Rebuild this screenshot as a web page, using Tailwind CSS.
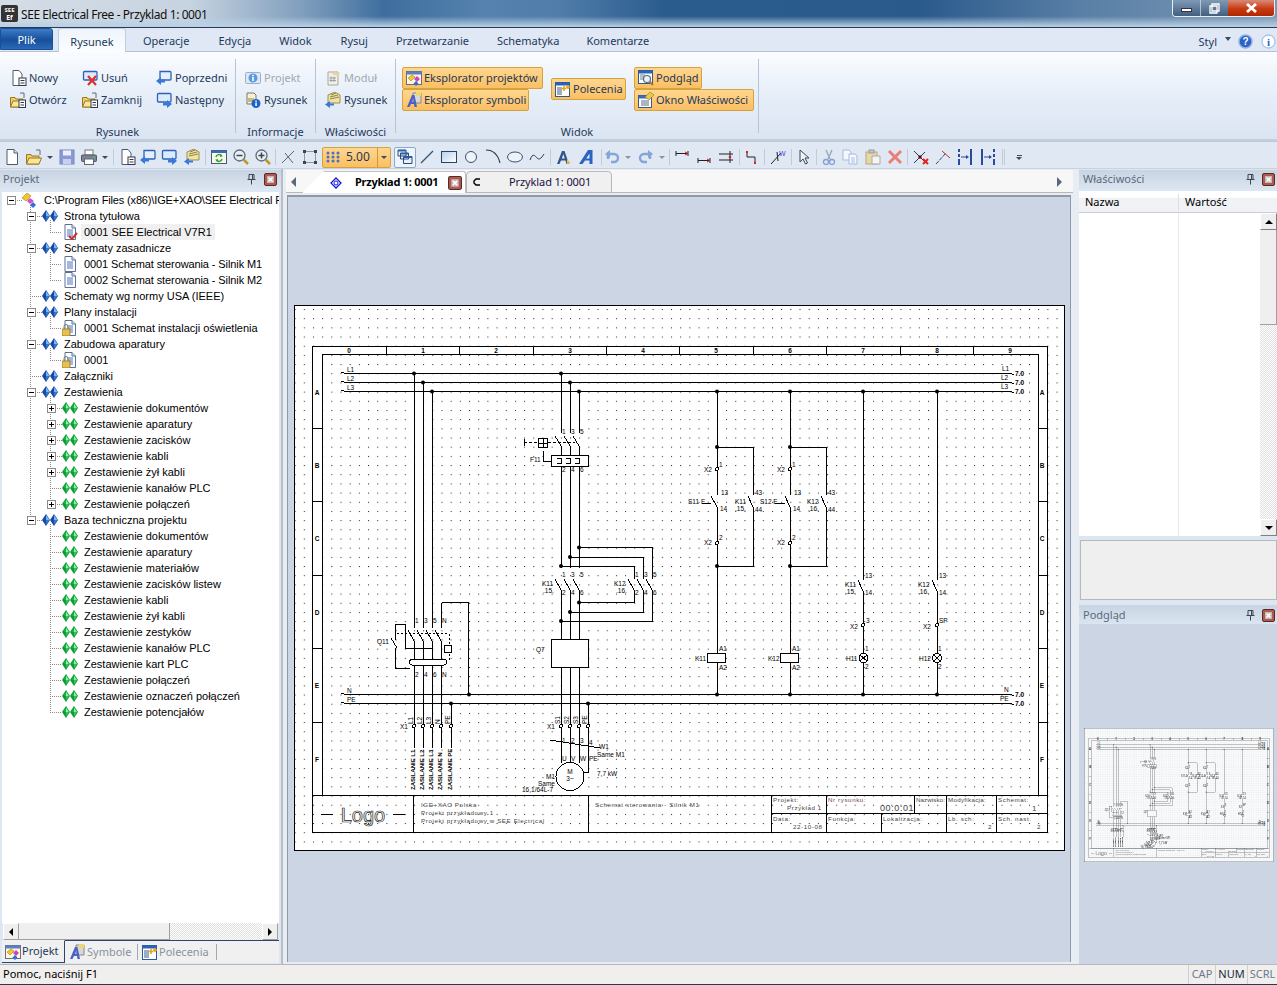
<!DOCTYPE html>
<html lang="pl">
<head>
<meta charset="utf-8">
<title>SEE Electrical Free</title>
<script src="https://cdn.jsdelivr.net/npm/@tailwindcss/browser@4"></script>
</head>
<body class="m-0 overflow-hidden">
<svg class="absolute h-0 w-0" width="0" height="0">
<defs>
<symbol id="dblue" viewBox="0 0 16 12"><path d="M4 0 8 6 4 12 0 6z" fill="#1848a8"/><path d="M4 1 7.500 6H4z" fill="#7ab8f2"/><path d="M4 6H7.500L4 11z" fill="#2f78d8"/><path d="M12 0 16 6 12 12 8 6z" fill="#1848a8"/><path d="M12 1 15.500 6H12z" fill="#7ab8f2"/><path d="M12 6H15.500L12 11z" fill="#2f78d8"/></symbol>
<symbol id="dgreen" viewBox="0 0 16 12"><path d="M4 0 8 6 4 12 0 6z" fill="#0f9a38"/><path d="M4 1.500 7 6H4z" fill="#8ff0a0"/><path d="M4 6H7L4 10.500z" fill="#2fc858"/><path d="M1 6H4V1.500z" fill="#18b048"/><path d="M12 0 16 6 12 12 8 6z" fill="#0f9a38"/><path d="M12 1.500 15 6H12z" fill="#8ff0a0"/><path d="M12 6H15L12 10.500z" fill="#2fc858"/><path d="M9 6H12V1.500z" fill="#18b048"/></symbol>
<symbol id="root" viewBox="0 0 16 16"><path d="M0 6 5 1 9 4 4 9z" fill="#f0c830" stroke="#a08010" stroke-width=".6"/><path d="M8 6 12 9 8 12 5 9z" fill="#d050d0"/><path d="M11 10 14 13 11 16 8 13z" fill="#3070d8"/></symbol>
<symbol id="doc" viewBox="0 0 16 16"><path d="M3 .5H10L13.500 4V15.500H3z" fill="#fff" stroke="#5a7090"/><path d="M10 .5V4H13.500" fill="#d8e4f0" stroke="#5a7090"/><path d="M5 6H11M5 8H11M5 10H11M5 12H11" stroke="#4a70c8"/></symbol>
<symbol id="doccheck" viewBox="0 0 16 16"><use href="#doc"/><path d="M7 12 10 15 15 9" fill="none" stroke="#d03020" stroke-width="2"/></symbol>
<symbol id="doclock" viewBox="0 0 16 16"><use href="#doc"/><rect x="0" y="9" width="8" height="7" fill="#e8c050" stroke="#8a6a10" stroke-width=".7"/><path d="M2 9V6.500A2 2 0 0 1 6 6.500V9" fill="none" stroke="#7a7a7a"/></symbol>
<symbol id="new" viewBox="0 0 16 16"><path d="M3 .5H10L13.500 4V15.500H3z" fill="#fff" stroke="#505a6a"/><path d="M10 .5V4H13.500" fill="#e4e8f0" stroke="#505a6a"/></symbol>
<symbol id="newdoc" viewBox="0 0 16 16"><path d="M2 .5H8L11 4V15.500H2z" fill="#fff" stroke="#505a6a"/><rect x="8" y="8" width="7" height="7.500" fill="#fff" stroke="#303a4a"/><path d="M9.500 10.500H13.500M9.500 13H13.500" stroke="#303a4a"/></symbol>
<symbol id="open" viewBox="0 0 16 16"><path d="M.5 5.500H5L6 7H13V15H.5z" fill="#f2cc6a" stroke="#9a7a20"/><path d="M.5 15 3 9H15.500L13 15z" fill="#fbe59a" stroke="#9a7a20"/><path d="M10 1 14 1V6" fill="none" stroke="#667"/></symbol>
<symbol id="opendoc" viewBox="0 0 16 16"><use href="#open"/><rect x="9" y="8" width="6.500" height="7.500" fill="#fff" stroke="#303a4a"/><path d="M10.500 10.500H14M10.500 13H14" stroke="#303a4a"/></symbol>
<symbol id="bub" viewBox="0 0 16 16"><path d="M2.500 1.500H14a1 1 0 0 1 1 1V9a1 1 0 0 1-1 1H2.500a1 1 0 0 1-1-1V2.500a1 1 0 0 1 1-1z" fill="#dceaff" stroke="#2f62b4" stroke-width="1.300"/></symbol>
<symbol id="del" viewBox="0 0 16 16"><use href="#bub"/><path d="M6 6 14 15M14 6 6 15" stroke="#e03028" stroke-width="2.200"/></symbol>
<symbol id="prev" viewBox="0 0 16 16"><path d="M4 1.500H14a1 1 0 0 1 1 1V9a1 1 0 0 1-1 1H4z" fill="#e4eeff" stroke="#2f62b4" stroke-width="1.300"/><path d="M0 11 5 7V9.500H9V12.500H5V15z" fill="#3a78d8"/></symbol>
<symbol id="next" viewBox="0 0 16 16"><use href="#bub"/><path d="M16 12 11 8V10.500H7V13.500H11V16z" fill="#3a78d8"/></symbol>
<symbol id="info" viewBox="0 0 16 16"><rect x=".5" y="2.500" width="15" height="11" rx="1" fill="#dfe8f2" stroke="#9ab0c8"/><circle cx="8" cy="8" r="4.500" fill="#5a9ae0"/><rect x="7.200" y="7" width="1.600" height="4" fill="#fff"/><rect x="7.200" y="4.800" width="1.600" height="1.500" fill="#fff"/></symbol>
<symbol id="rysinfo" viewBox="0 0 16 16"><path d="M2 1H9L11 3V12H2z" fill="#f4f0e0" stroke="#7a7a60"/><path d="M3 6H9V10H3z" fill="#c8b880"/><circle cx="11" cy="11.500" r="4.500" fill="#1c62c8"/><rect x="10.300" y="10.500" width="1.500" height="3.500" fill="#fff"/><rect x="10.300" y="8.500" width="1.500" height="1.300" fill="#fff"/></symbol>
<symbol id="mod" viewBox="0 0 16 16"><path d="M3 2H13V15H3z" fill="#f0f0ea" stroke="#a8a8a0"/><path d="M9 1 15 3 13 6 7 4z" fill="#e4d49c"/><path d="M6 6.500V12M9 6.500V12M4.500 8H11M4.500 10.500H11" stroke="#a0a0a0"/></symbol>
<symbol id="prop" viewBox="0 0 16 16"><path d="M3 3 10 0 15 3 15 11H3z" fill="#f2e4a0" stroke="#7a6a20" stroke-width=".7"/><path d="M6 3 11 1M5 5 13 3M5 7 14 5" stroke="#5a5a30" stroke-width=".7"/><path d="M0 12.500 5 9V11.500H9V13.500H5V16z" fill="#3a78d8"/></symbol>
<symbol id="exproj" viewBox="0 0 16 16"><rect x=".5" y="1.500" width="15" height="13" fill="#fff8d8" stroke="#6a6a8a"/><rect x=".5" y="1.500" width="15" height="3" fill="#5a80c8"/><path d="M2 8 6 5 9 7 5 11z" fill="#f0c830" stroke="#907010" stroke-width=".5"/><path d="M11 6 14 9 11 12 8 9z" fill="#d040d0"/><path d="M10 11 12.500 13.500 10 16 7.500 13.500z" fill="#3070d8"/></symbol>
<symbol id="exsym" viewBox="0 0 16 16"><path d="M7 1H15V11H7z" fill="#d8d8d8" stroke="#888"/><path d="M10 0H15V4H10z" fill="#f0d870"/><path d="M1 15 6 3H8.500L11 15H8.500L8 12H5L3.500 15zM6 10H7.700L7.200 6z" fill="#4a62c8"/></symbol>
<symbol id="pol" viewBox="0 0 16 16"><rect x=".5" y="1.500" width="14" height="14" fill="#fff" stroke="#2a5a9a"/><rect x=".5" y="1.500" width="14" height="3" fill="#2a62b8"/><path d="M2 7H7M2 9H7M2 11H7M2 13H7" stroke="#3a5a8a"/><path d="M9 5V10M6.500 7.500H11.500M13 4V8M11 6H15" stroke="#e0a818" stroke-width="1.600"/></symbol>
<symbol id="pod" viewBox="0 0 16 16"><rect x=".5" y=".5" width="14" height="13" fill="#fff" stroke="#2a5a9a"/><rect x=".5" y=".5" width="14" height="3" fill="#2a62b8"/><path d="M2 5H7M2 7H6M2 9H6" stroke="#6a7a90"/><circle cx="9" cy="9" r="3.500" fill="#e8f0f8" stroke="#5a6a7a" stroke-width="1.200"/><path d="M11.500 11.500 15 15" stroke="#a07830" stroke-width="2"/></symbol>
<symbol id="okno" viewBox="0 0 16 16"><rect x=".5" y="3.500" width="13" height="12" fill="#fff" stroke="#3a5a8a"/><rect x=".5" y="3.500" width="13" height="3" fill="#3a6ab8"/><path d="M3 9H11M3 11H11M3 13H11" stroke="#5a6a80"/><path d="M7 5 12 0 16 3 11 8z" fill="#e8c850" stroke="#806a10" stroke-width=".5"/></symbol>
<symbol id="save" viewBox="0 0 16 16"><rect x="1" y="1" width="14" height="14" fill="#8a9ad8" stroke="#7a88c0"/><rect x="4" y="1.500" width="8" height="5" fill="#eef"/><rect x="4" y="10" width="8" height="5" fill="#c8d0ee"/></symbol>
<symbol id="print" viewBox="0 0 16 16"><rect x="4" y="1" width="8" height="5" fill="#fff" stroke="#778"/><rect x=".5" y="6" width="15" height="6.500" rx="1" fill="#7a8594" stroke="#556"/><rect x="3.500" y="10" width="9" height="5.500" fill="#fff" stroke="#667"/><rect x="12" y="7.500" width="2" height="1.500" fill="#4ac060"/></symbol>
<symbol id="refresh" viewBox="0 0 16 16"><rect x=".5" y="1.500" width="15" height="13" fill="#f8f8e8" stroke="#4a5a7a"/><rect x=".5" y="1.500" width="15" height="2.500" fill="#3a6ab8"/><path d="M5 8A3 3 0 0 1 10.500 7M11 10A3 3 0 0 1 5.500 11" fill="none" stroke="#2aa030" stroke-width="1.500"/><path d="M9.500 5 11.800 7.300 9 8zM6.500 13 4.200 10.700 7 10z" fill="#2aa030"/></symbol>
<symbol id="zm" viewBox="0 0 16 16"><circle cx="6.500" cy="6.500" r="5.500" fill="#e8eef6" stroke="#5f6a78" stroke-width="1.300"/><path d="M3.500 6.500H9.500" stroke="#3a4654" stroke-width="1.500"/><path d="M10.500 10.500 15 15" stroke="#c09828" stroke-width="2.500"/></symbol>
<symbol id="zp" viewBox="0 0 16 16"><use href="#zm"/><path d="M6.500 3.500V9.500" stroke="#3a4654" stroke-width="1.500"/></symbol>
<symbol id="copy" viewBox="0 0 16 16"><path d="M1 1H7L9 3V11H1z" fill="#f4f8ff" stroke="#a8b8d8"/><path d="M7 5H13L15 7V15H7z" fill="#f4f8ff" stroke="#a8b8d8"/><path d="M9 9H13M9 11H13M9 13H13" stroke="#a8c0e0"/></symbol>
<symbol id="paste" viewBox="0 0 16 16"><rect x="1" y="3" width="11" height="12" fill="#e8d8a8" stroke="#b8a878"/><rect x="4" y="1" width="5" height="3" fill="#c8c8c8" stroke="#999"/><path d="M7 7H15V15H7z" fill="#f4f4f4" stroke="#a8a8a8"/></symbol>
<symbol id="closex" viewBox="0 0 13 13"><rect x=".5" y=".5" width="12" height="12" rx="1.500" fill="#ad5a50" stroke="#5a2a28"/><rect x="3" y="3" width="7" height="7" fill="#c8b8b4"/><path d="M4.500 4.500 8.500 8.500M8.500 4.500 4.500 8.500" stroke="#fff" stroke-width="1.500"/></symbol>
<symbol id="pin" viewBox="0 0 9 11"><path d="M2 .5H7V5.500H2zM.5 5.500H8.500M4.500 5.500V10.500M5.500 1V5" fill="none" stroke="#3a4654"/></symbol>
<symbol id="minus" viewBox="0 0 9 9"><rect x=".5" y=".5" width="8" height="8" fill="#fff" stroke="#8a8a8a"/><path d="M2 4.500H7" stroke="#000"/></symbol>
<symbol id="plus" viewBox="0 0 9 9"><use href="#minus"/><path d="M4.500 2V7" stroke="#000"/></symbol>
<pattern id="grid" patternUnits="userSpaceOnUse" x="303.800" y="309" width="9.180" height="9.180"><rect width="1" height="1" fill="#222"/></pattern>
</defs>
</svg>

<div class="flex h-[985px] w-[1277px] flex-col overflow-hidden bg-[#dde7f3] font-['Noto_Sans','DejaVu_Sans',sans-serif] text-[11px] text-[#1e395b]">

<!-- title bar -->
<header class="flex h-[27px] shrink-0 items-start justify-between bg-[linear-gradient(180deg,transparent_60%,#b9d0e4_100%),linear-gradient(90deg,#d5dde6_0%,#c6d3e0_15%,#7d9cbc_24%,#3f6e9e_30%,#5582ae_38%,#4f7ca9_44%,#2b5c8e_52%,#2a5a8c_72%,#5a80a6_85%,#7a98b6_100%)]">
  <div class="flex h-[27px] items-center gap-[3px] pl-[1px]">
    <div class="flex h-[17px] w-[17px] flex-col items-center justify-center rounded-[2px] bg-[#333] font-bold leading-[7px] text-white"><span class="text-[6px]">SEE</span><span class="text-[7px]">Ef</span></div>
    <span class="mt-[2px] text-[12px] tracking-[-0.42px] text-[#111]">SEE Electrical Free - Przyklad 1: 0001</span>
  </div>
  <div class="mr-[2px] flex h-[17px] overflow-hidden rounded-b-[4px] border border-t-0 border-[#e8eef4]">
    <div class="flex w-[28px] items-center justify-center border-r border-[#e8eef4]/60 bg-[linear-gradient(180deg,#7f9ab6,#445f7e)]"><div class="mt-[3px] h-[4px] w-[11px] border border-[#334] bg-white"></div></div>
    <div class="flex w-[27px] items-center justify-center bg-[linear-gradient(180deg,#7f9ab6,#445f7e)]"><svg class="h-[11px] w-[11px]" viewBox="0 0 11 11"><path d="M3 1H10V8H3zM1 3H8V10H1z" fill="none" stroke="#fff" stroke-width="1.300"/></svg></div>
    <div class="flex w-[46px] items-center justify-center bg-[linear-gradient(180deg,#d88a78,#c83a12_55%,#b02800)]"><svg class="h-[10px] w-[13px]" viewBox="0 0 13 10"><path d="M2 1 11 9M11 1 2 9" stroke="#fff" stroke-width="2.800"/></svg></div>
  </div>
</header>

<!-- ribbon tabs -->
<nav class="flex h-[25px] shrink-0 items-end justify-between border-t border-[#2a3a52] border-b border-b-[#b5c2d1] bg-[#dfe8f4]">
  <div class="flex h-full items-end">
    <div class="mb-[1px] flex h-[22px] w-[53px] items-center justify-center rounded-tr-[3px] border border-[#1c4f96] bg-[linear-gradient(180deg,#3b7cc8,#174f9c_55%,#2a6ab8)] pt-[3px] text-white">Plik</div>
    <div class="ml-[5px] -mb-px flex h-[24px] w-[68px] items-center justify-center rounded-t-[3px] border border-b-0 border-[#c2cedd] bg-[linear-gradient(180deg,#eff5fc,#fbfdff)] pt-[3px]">Rysunek</div>
    <span class="ml-[17px] mb-[2px]">Operacje</span>
    <span class="ml-[29px] mb-[2px]">Edycja</span>
    <span class="ml-[28px] mb-[2px]">Widok</span>
    <span class="ml-[29px] mb-[2px]">Rysuj</span>
    <span class="ml-[28px] mb-[2px]">Przetwarzanie</span>
    <span class="ml-[28px] mb-[2px]">Schematyka</span>
    <span class="ml-[27px] mb-[2px]">Komentarze</span>
  </div>
  <div class="mb-[1px] flex items-center">
    <span>Styl</span>
    <span class="ml-[8px] mb-[6px] h-0 w-0 border-x-[3px] border-t-[4px] border-x-transparent border-t-[#3a4a60]"></span>
    <svg class="ml-[7px] h-[15px] w-[15px]" viewBox="0 0 15 15"><circle cx="7.500" cy="7.500" r="6.500" fill="#2a62c8" stroke="#8fb0e0" stroke-width="1.500"/><text x="7.500" y="11" text-anchor="middle" font-size="10" font-weight="700" fill="#fff" font-family="Liberation Sans">?</text></svg>
    <svg class="ml-[8px] mr-[1px] h-[15px] w-[15px]" viewBox="0 0 15 15"><circle cx="7.500" cy="7.500" r="6.500" fill="#fff" stroke="#a8c4e8" stroke-width="1.300"/><text x="7.500" y="11.500" text-anchor="middle" font-size="11" font-weight="700" fill="#2a62c8" font-family="Liberation Serif">i</text></svg>
  </div>
</nav>

<!-- ribbon -->
<section class="relative flex h-[89px] shrink-0 border-b-2 border-[#c2cfde] bg-[linear-gradient(180deg,#fafcff_0%,#e6eef8_50%,#dbe5f2_100%)]">
  <div class="flex h-full w-[235px] flex-col border-r-0">
    <div class="flex h-[70px] shrink-0 items-start pl-[11px] pt-[15px]">
      <div class="flex w-[71px] flex-col">
        <div class="flex h-[22px] items-center gap-[2px]"><svg class="h-4 w-4"><use href="#newdoc"/></svg>Nowy</div>
        <div class="flex h-[22px] items-center gap-[3px]"><svg class="h-4 w-4 -ml-[1px]"><use href="#opendoc"/></svg>Otwórz</div>
      </div>
      <div class="flex w-[74px] flex-col">
        <div class="flex h-[22px] items-center gap-[3px]"><svg class="h-4 w-4"><use href="#del"/></svg>Usuń</div>
        <div class="flex h-[22px] items-center gap-[3px]"><svg class="h-4 w-4"><use href="#opendoc"/></svg>Zamknij</div>
      </div>
      <div class="flex flex-col">
        <div class="flex h-[22px] items-center gap-[3px]"><svg class="h-4 w-4"><use href="#prev"/></svg>Poprzedni</div>
        <div class="flex h-[22px] items-center gap-[3px]"><svg class="h-4 w-4"><use href="#next"/></svg>Następny</div>
      </div>
    </div>
    <div class="pt-[2px] text-center">Rysunek</div>
  </div>
  <div class="mt-[7px] mb-[6px] w-px bg-[#b5c4d6]"></div>
  <div class="flex h-full w-[79px] flex-col">
    <div class="flex h-[70px] shrink-0 flex-col pl-[9px] pt-[15px]">
      <div class="flex h-[22px] items-center gap-[3px] text-[#a0a8b4]"><svg class="h-4 w-4"><use href="#info"/></svg>Projekt</div>
      <div class="flex h-[22px] items-center gap-[3px]"><svg class="h-4 w-4"><use href="#rysinfo"/></svg>Rysunek</div>
    </div>
    <div class="pt-[2px] text-center">Informacje</div>
  </div>
  <div class="mt-[7px] mb-[6px] w-px bg-[#b5c4d6]"></div>
  <div class="flex h-full w-[79px] flex-col">
    <div class="flex h-[70px] shrink-0 flex-col pl-[9px] pt-[15px]">
      <div class="flex h-[22px] items-center gap-[3px] text-[#a0a8b4]"><svg class="h-4 w-4"><use href="#mod"/></svg>Moduł</div>
      <div class="flex h-[22px] items-center gap-[3px]"><svg class="h-4 w-4"><use href="#prop"/></svg>Rysunek</div>
    </div>
    <div class="pt-[2px] text-center">Właściwości</div>
  </div>
  <div class="mt-[7px] mb-[6px] w-px bg-[#b5c4d6]"></div>
  <div class="flex h-full w-[362px] flex-col">
    <div class="flex h-[70px] shrink-0 items-center pl-[6px] pt-[4px]">
      <div class="flex w-[149px] flex-col">
        <div class="flex h-[22px] w-[141px] items-center gap-[2px] rounded-[2px] border border-[#d3a33e] bg-[linear-gradient(180deg,#ffd68e,#fbbf62)] pl-[3px]"><svg class="h-4 w-4"><use href="#exproj"/></svg>Eksplorator projektów</div>
        <div class="flex h-[22px] w-[127px] items-center gap-[2px] rounded-[2px] border border-[#d3a33e] bg-[linear-gradient(180deg,#ffd68e,#fbbf62)] pl-[3px]"><svg class="h-4 w-4"><use href="#exsym"/></svg>Eksplorator symboli</div>
      </div>
      <div class="flex h-[22px] w-[75px] items-center gap-[2px] rounded-[2px] border border-[#d3a33e] bg-[linear-gradient(180deg,#ffd68e,#fbbf62)] pl-[3px]"><svg class="h-4 w-4"><use href="#pol"/></svg>Polecenia</div>
      <div class="ml-[8px] flex flex-col">
        <div class="flex h-[22px] w-[68px] items-center gap-[2px] rounded-[2px] border border-[#d3a33e] bg-[linear-gradient(180deg,#ffd68e,#fbbf62)] pl-[3px]"><svg class="h-4 w-4"><use href="#pod"/></svg>Podgląd</div>
        <div class="flex h-[22px] w-[120px] items-center gap-[2px] rounded-[2px] border border-[#d3a33e] bg-[linear-gradient(180deg,#ffd68e,#fbbf62)] pl-[3px]"><svg class="h-4 w-4"><use href="#okno"/></svg>Okno Właściwości</div>
      </div>
    </div>
    <div class="pt-[2px] text-center">Widok</div>
  </div>
  <div class="mt-[7px] mb-[6px] w-px bg-[#b5c4d6]"></div>
</section>

<!-- toolbar -->
<div class="flex h-[27px] shrink-0 items-center border-t border-[#bcc8d8] bg-[#dfe8f3] pl-[1px] pt-[4px]">
  <span class="flex w-[22px] justify-center"><svg class="h-4 w-4"><use href="#new"/></svg></span>
  <span class="flex w-[22px] justify-center"><svg class="h-4 w-4"><use href="#open"/></svg></span>
  <span class="flex w-[10px] justify-center"><span class="h-0 w-0 border-x-[3px] border-t-[3px] border-x-transparent border-t-[#3a4a60]"></span></span>
  <span class="ml-[1px] flex w-[22px] justify-center"><svg class="h-4 w-4"><use href="#save"/></svg></span>
  <span class="flex w-[22px] justify-center"><svg class="h-4 w-4"><use href="#print"/></svg></span>
  <span class="flex w-[10px] justify-center"><span class="h-0 w-0 border-x-[3px] border-t-[3px] border-x-transparent border-t-[#3a4a60]"></span></span>
  <span class="mx-[3px] h-[16px] w-px bg-[#c0ccda]"></span>
  <span class="flex w-[21px] justify-center"><svg class="h-4 w-4"><use href="#newdoc"/></svg></span>
  <span class="flex w-[20px] justify-center"><svg class="h-4 w-4"><use href="#prev"/></svg></span>
  <span class="flex w-[22px] justify-center"><svg class="h-4 w-4"><use href="#next"/></svg></span>
  <span class="flex w-[23px] justify-center"><svg class="h-4 w-4"><use href="#prop"/></svg></span>
  <span class="mx-[2px] h-[16px] w-px bg-[#c0ccda]"></span>
  <span class="flex w-[22px] justify-center"><svg class="h-4 w-4"><use href="#refresh"/></svg></span>
  <span class="flex w-[22px] justify-center"><svg class="h-4 w-4"><use href="#zm"/></svg></span>
  <span class="flex w-[22px] justify-center"><svg class="h-4 w-4"><use href="#zp"/></svg></span>
  <span class="mx-[1px] h-[16px] w-px bg-[#c0ccda]"></span>
  <span class="flex w-[22px] justify-center"><svg class="h-4 w-4" viewBox="0 0 16 16"><path d="M2 14 14 2M5 4 13 14" stroke="#5a6674"/></svg></span>
  <span class="flex w-[21px] justify-center"><svg class="h-4 w-4" viewBox="0 0 16 16"><rect x="2.500" y="2.500" width="11" height="11" fill="none" stroke="#3a4654" stroke-dasharray="1 1"/><path d="M1 1H4V4H1zM12 1H15V4H12zM1 12H4V15H1zM12 12H15V15H12z" fill="#3a4654"/></svg></span>
  <div class="ml-[2px] flex h-[21px] w-[69px] items-center rounded-[2px] border border-[#d3a33e] bg-[linear-gradient(180deg,#ffd68e,#fbbf62)]">
    <svg class="ml-[3px] h-4 w-[15px]" viewBox="0 0 15 16"><g fill="#4a70c0"><circle cx="2" cy="4" r="1.500"/><circle cx="7" cy="4" r="1.500"/><circle cx="12" cy="4" r="1.500"/><circle cx="2" cy="8" r="1.500"/><circle cx="7" cy="8" r="1.500"/><circle cx="12" cy="8" r="1.500"/><circle cx="2" cy="12" r="1.500"/><circle cx="7" cy="12" r="1.500"/><circle cx="12" cy="12" r="1.500"/></g></svg>
    <span class="ml-[5px] w-[31px] text-[12px]">5.00</span>
    <span class="flex h-full flex-1 items-center justify-center border-l border-[#c89a3c]"><span class="h-0 w-0 border-x-[3px] border-t-[3px] border-x-transparent border-t-[#3a4a60]"></span></span>
  </div>
  <span class="ml-[3px] flex h-[21px] w-[22px] items-center justify-center rounded-[2px] border border-[#8fa8c8] bg-[#eef4fb]"><svg class="h-4 w-4" viewBox="0 0 16 16"><path d="M1 1H9V7H1zM3.500 4H11.500V10H3.500zM6.500 7.500H15V14.500H6.500z" fill="#e8f0fa" stroke="#2a4a7a"/><path d="M1 1H9V2.500H1zM3.500 4H11.500V5.500H3.500zM6.500 7.500H15V9H6.500z" fill="#2a62b0"/></svg></span>
  <span class="flex w-[22px] justify-center"><svg class="h-4 w-4" viewBox="0 0 16 16"><path d="M2 14 14 2" stroke="#3a5070" stroke-width="1.200"/></svg></span>
  <span class="flex w-[22px] justify-center"><svg class="h-4 w-4" viewBox="0 0 16 16"><defs><linearGradient id="lg1" x1="0" y1="0" x2="1" y2="1"><stop stop-color="#b8d0ec"/><stop offset="1" stop-color="#fff"/></linearGradient></defs><rect x=".5" y="2.500" width="15" height="11" fill="url(#lg1)" stroke="#2a4464"/></svg></span>
  <span class="flex w-[22px] justify-center"><svg class="h-4 w-4" viewBox="0 0 16 16"><circle cx="8" cy="8" r="5.500" fill="#eef3f9" stroke="#3a5070"/></svg></span>
  <span class="flex w-[22px] justify-center"><svg class="h-4 w-4" viewBox="0 0 16 16"><path d="M1 1C8 1 13 6 15 14" fill="none" stroke="#2a3a52" stroke-width="1.100"/></svg></span>
  <span class="flex w-[22px] justify-center"><svg class="h-4 w-4" viewBox="0 0 16 16"><ellipse cx="8" cy="8" rx="7.500" ry="5" fill="#eef3f9" stroke="#3a5070"/></svg></span>
  <span class="flex w-[22px] justify-center"><svg class="h-4 w-4" viewBox="0 0 16 16"><path d="M1 11C4 3 6 7 8 9S12 10 15 5" fill="none" stroke="#2a3a52"/></svg></span>
  <span class="mx-[2px] h-[16px] w-px bg-[#c0ccda]"></span>
  <span class="flex w-[22px] justify-center"><svg class="h-4 w-4" viewBox="0 0 16 16"><path d="M1 15 6 2H8.500L13 15H10.500L9.500 11.500H5L3.500 15zM5.800 9.500H8.800L7.300 5z" fill="#34548c"/><path d="M11 10 15 14 11 15z" fill="#e8c050"/></svg></span>
  <span class="flex w-[24px] justify-center"><svg class="h-4 w-4" viewBox="0 0 16 16"><path d="M0 15 9 1H13.500V15H10.500V11.500H6L3.500 15zM7.200 9.500H10.500V4.500z" fill="#2c62c0"/></svg></span>
  <span class="mx-[2px] h-[16px] w-px bg-[#c0ccda]"></span>
  <span class="flex w-[16px] justify-center opacity-60"><svg class="h-4 w-4" viewBox="0 0 16 16"><path d="M4 10V5H10A3.500 3.500 0 0 1 10 13H7" fill="none" stroke="#4a7ac8" stroke-width="2.400"/><path d="M1 5 6 1V9z" fill="#4a7ac8"/></svg></span>
  <span class="flex w-[16px] justify-center"><span class="h-0 w-0 border-x-[3px] border-t-[3px] border-x-transparent border-t-[#8a94a4]"></span></span>
  <span class="flex w-[20px] justify-center opacity-60"><svg class="h-4 w-4" viewBox="0 0 16 16"><path d="M12 10V5H6A3.500 3.500 0 0 0 6 13H9" fill="none" stroke="#4a7ac8" stroke-width="2.400"/><path d="M15 5 10 1V9z" fill="#4a7ac8"/></svg></span>
  <span class="flex w-[12px] justify-center"><span class="h-0 w-0 border-x-[3px] border-t-[3px] border-x-transparent border-t-[#8a94a4]"></span></span>
  <span class="mx-[1px] h-[16px] w-px bg-[#c0ccda]"></span>
  <span class="flex w-[21px] justify-center"><svg class="h-4 w-4" viewBox="0 0 16 16"><path d="M2 2V7M14 2V7M2 4.500H13" stroke="#222"/><path d="M11 3 14 4.500 11 6" fill="none" stroke="#d02020"/></svg></span>
  <span class="flex w-[23px] justify-center"><svg class="h-4 w-4" viewBox="0 0 16 16"><path d="M2 9V14M14 9V14M2 11.500H13" stroke="#222"/><path d="M11 10 14 11.500 11 13" fill="none" stroke="#d02020"/></svg></span>
  <span class="flex w-[22px] justify-center"><svg class="h-4 w-4" viewBox="0 0 16 16"><path d="M1 5H15M1 11H15M12 2V14" stroke="#222"/><circle cx="12" cy="8" r="1.300" fill="#d02020"/></svg></span>
  <span class="mx-[2px] h-[16px] w-px bg-[#c0ccda]"></span>
  <span class="flex w-[20px] justify-center"><svg class="h-4 w-4" viewBox="0 0 16 16"><path d="M3 3V8H11V14" fill="none" stroke="#222"/><rect x="2" y="2" width="2" height="2" fill="#e02020"/><rect x="10" y="13" width="2" height="2" fill="#e02020"/></svg></span>
  <span class="mx-[2px] h-[16px] w-px bg-[#c0ccda]"></span>
  <span class="flex w-[22px] justify-center"><svg class="h-4 w-4" viewBox="0 0 16 16"><path d="M1 15 11 4M7 3 8 12" stroke="#222"/><text x="9" y="7" font-size="7" fill="#4a48d8" font-family="Liberation Sans">W</text></svg></span>
  <span class="mx-[2px] h-[16px] w-px bg-[#c0ccda]"></span>
  <span class="flex w-[20px] justify-center"><svg class="h-4 w-4" viewBox="0 0 16 16"><path d="M4 1V13L7 10 9.500 15 11.500 14 9 9H13z" fill="#eef2f7" stroke="#3a4654"/></svg></span>
  <span class="mx-[2px] h-[16px] w-px bg-[#c0ccda]"></span>
  <span class="flex w-[20px] justify-center opacity-60"><svg class="h-4 w-4" viewBox="0 0 16 16"><path d="M5 1 9 10M11 1 7 10" stroke="#6a7a90" stroke-width="1.300"/><circle cx="5" cy="13" r="2.500" fill="none" stroke="#4a70c0" stroke-width="1.300"/><circle cx="11" cy="13" r="2.500" fill="none" stroke="#4a70c0" stroke-width="1.300"/></svg></span>
  <span class="flex w-[22px] justify-center"><svg class="h-4 w-4"><use href="#copy"/></svg></span>
  <span class="flex w-[23px] justify-center"><svg class="h-4 w-4"><use href="#paste"/></svg></span>
  <span class="flex w-[22px] justify-center"><svg class="h-4 w-4" viewBox="0 0 16 16"><path d="M2 2 14 14M14 2 2 14" stroke="#e88078" stroke-width="3"/></svg></span>
  <span class="mx-[1px] h-[16px] w-px bg-[#c0ccda]"></span>
  <span class="flex w-[23px] justify-center"><svg class="h-4 w-4" viewBox="0 0 16 16"><path d="M1 2 13 14M1 14 12 3" stroke="#2a3a52"/><rect x="5.500" y="6.500" width="3" height="3" fill="#600"/><path d="M10 10 15 15M15 10 10 15" stroke="#e82020" stroke-width="2"/></svg></span>
  <span class="flex w-[22px] justify-center"><svg class="h-4 w-4" viewBox="0 0 16 16"><path d="M1 15 11 4" stroke="#2a4a7a" stroke-dasharray="4 1"/><path d="M7 2 15 9" stroke="#c03028"/></svg></span>
  <span class="flex w-[22px] justify-center"><svg class="h-4 w-4" viewBox="0 0 16 16"><path d="M2 0V3M2 5V8M2 10V16M14 0V16" stroke="#2a4a9a" stroke-width="2"/><path d="M4 8H10" stroke="#2a4a9a"/><path d="M9 6 12 8 9 10z" fill="#2a4a9a"/></svg></span>
  <span class="flex w-[23px] justify-center"><svg class="h-4 w-4" viewBox="0 0 16 16"><path d="M14 0V3M14 5V8M14 10V16M2 0V16" stroke="#2a4a9a" stroke-width="2"/><path d="M4 8H10" stroke="#2a4a9a"/><path d="M9 6 12 8 9 10z" fill="#2a4a9a"/></svg></span>
  <span class="mx-[3px] h-[16px] w-[3px] border-x border-[#c0ccda]"></span>
  <span class="ml-[6px] flex w-[10px] flex-col items-center gap-[1px]"><span class="h-px w-[5px] bg-[#3a4a60]"></span><span class="h-0 w-0 border-x-[3px] border-t-[3px] border-x-transparent border-t-[#3a4a60]"></span></span>
</div>

<!-- main -->
<main class="flex min-h-0 flex-1 border-t border-[#c8d2de]">

  <!-- left panel -->
  <aside class="flex w-[281px] shrink-0 flex-col pl-[2px] pt-[1px]">
    <div class="-ml-[2px] flex h-[19px] items-center justify-between bg-[linear-gradient(180deg,#c8d4e2,#dbe5f1)] pl-[3px] pr-[4px] text-[#5a6a7c]">
      <span>Projekt</span>
      <span class="flex items-center gap-[8px]"><svg class="h-[11px] w-[9px]"><use href="#pin"/></svg><svg class="h-[13px] w-[13px]"><use href="#closex"/></svg></span>
    </div>
    <div class="relative mt-[3px] h-[731px] w-[277px] overflow-hidden bg-white text-black">
      <svg class="absolute left-0 top-0 h-[560px] w-[100px]" viewBox="2 192 100 560" shape-rendering="crispEdges">
        <g stroke="#8a8a8a" stroke-dasharray="1 1" fill="none">
          <path d="M15 200H22M30 205V216M30 216V520M35 216H42M35 248H42M30 296H42M35 312H42M35 344H42M30 376H42M35 392H42M35 520H42"/>
          <path d="M50 220V232H62M50 252V280H62M50 264H62M50 316V328H62M50 348V360H62M50 396V504M55 408H62M55 424H62M55 440H62M55 456H62M55 472H62M50 488H62M55 504H62M50 524V712M50 536H62M50 552H62M50 568H62M50 584H62M50 600H62M50 616H62M50 632H62M50 648H62M50 664H62M50 680H62M50 696H62M50 712H62"/>
        </g>
      </svg>
      <div class="relative font-['Liberation_Sans',sans-serif]">
        <div class="flex h-4 items-center pl-[5px]"><svg class="h-[9px] w-[9px] shrink-0"><use href="#minus"/></svg><svg class="ml-[6px] h-4 w-4 shrink-0"><use href="#root"/></svg><span class="ml-[6px] whitespace-nowrap tracking-[-0.15px]">C:\Program Files (x86)\IGE+XAO\SEE Electrical F</span></div>
        <div class="flex h-4 items-center pl-[25px]"><svg class="h-[9px] w-[9px]"><use href="#minus"/></svg><svg class="ml-[6px] h-3 w-4"><use href="#dblue"/></svg><span class="ml-[6px]">Strona tytułowa</span></div>
        <div class="flex h-4 items-center pl-[60px]"><svg class="h-4 w-4"><use href="#doccheck"/></svg><span class="ml-[3px] bg-[#f0f0f0] px-[3px]">0001 SEE Electrical V7R1</span></div>
        <div class="flex h-4 items-center pl-[25px]"><svg class="h-[9px] w-[9px]"><use href="#minus"/></svg><svg class="ml-[6px] h-3 w-4"><use href="#dblue"/></svg><span class="ml-[6px]">Schematy zasadnicze</span></div>
        <div class="flex h-4 items-center pl-[60px]"><svg class="h-4 w-4"><use href="#doc"/></svg><span class="ml-[6px] tracking-[-0.1px]">0001 Schemat sterowania - Silnik M1</span></div>
        <div class="flex h-4 items-center pl-[60px]"><svg class="h-4 w-4"><use href="#doc"/></svg><span class="ml-[6px] tracking-[-0.1px]">0002 Schemat sterowania - Silnik M2</span></div>
        <div class="flex h-4 items-center pl-[40px]"><svg class="h-3 w-4"><use href="#dblue"/></svg><span class="ml-[6px]">Schematy wg normy USA (IEEE)</span></div>
        <div class="flex h-4 items-center pl-[25px]"><svg class="h-[9px] w-[9px]"><use href="#minus"/></svg><svg class="ml-[6px] h-3 w-4"><use href="#dblue"/></svg><span class="ml-[6px]">Plany instalacji</span></div>
        <div class="flex h-4 items-center pl-[60px]"><svg class="h-4 w-4"><use href="#doclock"/></svg><span class="ml-[6px]">0001 Schemat instalacji oświetlenia</span></div>
        <div class="flex h-4 items-center pl-[25px]"><svg class="h-[9px] w-[9px]"><use href="#minus"/></svg><svg class="ml-[6px] h-3 w-4"><use href="#dblue"/></svg><span class="ml-[6px]">Zabudowa aparatury</span></div>
        <div class="flex h-4 items-center pl-[60px]"><svg class="h-4 w-4"><use href="#doclock"/></svg><span class="ml-[6px]">0001</span></div>
        <div class="flex h-4 items-center pl-[40px]"><svg class="h-3 w-4"><use href="#dblue"/></svg><span class="ml-[6px]">Załączniki</span></div>
        <div class="flex h-4 items-center pl-[25px]"><svg class="h-[9px] w-[9px]"><use href="#minus"/></svg><svg class="ml-[6px] h-3 w-4"><use href="#dblue"/></svg><span class="ml-[6px]">Zestawienia</span></div>
        <div class="flex h-4 items-center pl-[45px]"><svg class="h-[9px] w-[9px]"><use href="#plus"/></svg><svg class="ml-[6px] h-3 w-4"><use href="#dgreen"/></svg><span class="ml-[6px]">Zestawienie dokumentów</span></div>
        <div class="flex h-4 items-center pl-[45px]"><svg class="h-[9px] w-[9px]"><use href="#plus"/></svg><svg class="ml-[6px] h-3 w-4"><use href="#dgreen"/></svg><span class="ml-[6px]">Zestawienie aparatury</span></div>
        <div class="flex h-4 items-center pl-[45px]"><svg class="h-[9px] w-[9px]"><use href="#plus"/></svg><svg class="ml-[6px] h-3 w-4"><use href="#dgreen"/></svg><span class="ml-[6px]">Zestawienie zacisków</span></div>
        <div class="flex h-4 items-center pl-[45px]"><svg class="h-[9px] w-[9px]"><use href="#plus"/></svg><svg class="ml-[6px] h-3 w-4"><use href="#dgreen"/></svg><span class="ml-[6px]">Zestawienie kabli</span></div>
        <div class="flex h-4 items-center pl-[45px]"><svg class="h-[9px] w-[9px]"><use href="#plus"/></svg><svg class="ml-[6px] h-3 w-4"><use href="#dgreen"/></svg><span class="ml-[6px]">Zestawienie żył kabli</span></div>
        <div class="flex h-4 items-center pl-[60px]"><svg class="h-3 w-4"><use href="#dgreen"/></svg><span class="ml-[6px]">Zestawienie kanałów PLC</span></div>
        <div class="flex h-4 items-center pl-[45px]"><svg class="h-[9px] w-[9px]"><use href="#plus"/></svg><svg class="ml-[6px] h-3 w-4"><use href="#dgreen"/></svg><span class="ml-[6px]">Zestawienie połączeń</span></div>
        <div class="flex h-4 items-center pl-[25px]"><svg class="h-[9px] w-[9px]"><use href="#minus"/></svg><svg class="ml-[6px] h-3 w-4"><use href="#dblue"/></svg><span class="ml-[6px]">Baza techniczna projektu</span></div>
        <div class="flex h-4 items-center pl-[60px]"><svg class="h-3 w-4"><use href="#dgreen"/></svg><span class="ml-[6px]">Zestawienie dokumentów</span></div>
        <div class="flex h-4 items-center pl-[60px]"><svg class="h-3 w-4"><use href="#dgreen"/></svg><span class="ml-[6px]">Zestawienie aparatury</span></div>
        <div class="flex h-4 items-center pl-[60px]"><svg class="h-3 w-4"><use href="#dgreen"/></svg><span class="ml-[6px]">Zestawienie materiałów</span></div>
        <div class="flex h-4 items-center pl-[60px]"><svg class="h-3 w-4"><use href="#dgreen"/></svg><span class="ml-[6px]">Zestawienie zacisków listew</span></div>
        <div class="flex h-4 items-center pl-[60px]"><svg class="h-3 w-4"><use href="#dgreen"/></svg><span class="ml-[6px]">Zestawienie kabli</span></div>
        <div class="flex h-4 items-center pl-[60px]"><svg class="h-3 w-4"><use href="#dgreen"/></svg><span class="ml-[6px]">Zestawienie żył kabli</span></div>
        <div class="flex h-4 items-center pl-[60px]"><svg class="h-3 w-4"><use href="#dgreen"/></svg><span class="ml-[6px]">Zestawienie zestyków</span></div>
        <div class="flex h-4 items-center pl-[60px]"><svg class="h-3 w-4"><use href="#dgreen"/></svg><span class="ml-[6px]">Zestawienie kanałów PLC</span></div>
        <div class="flex h-4 items-center pl-[60px]"><svg class="h-3 w-4"><use href="#dgreen"/></svg><span class="ml-[6px]">Zestawienie kart PLC</span></div>
        <div class="flex h-4 items-center pl-[60px]"><svg class="h-3 w-4"><use href="#dgreen"/></svg><span class="ml-[6px]">Zestawienie połączeń</span></div>
        <div class="flex h-4 items-center pl-[60px]"><svg class="h-3 w-4"><use href="#dgreen"/></svg><span class="ml-[6px]">Zestawienie oznaczeń połączeń</span></div>
        <div class="flex h-4 items-center pl-[60px]"><svg class="h-3 w-4"><use href="#dgreen"/></svg><span class="ml-[6px]">Zestawienie potencjałów</span></div>
      </div>
    </div>
    <!-- horizontal scrollbar -->
    <div class="flex h-[17px] w-[275px] bg-white ml-[1px]">
      <span class="flex w-[16px] items-center justify-center border border-[#a0a0a0] border-t-white border-l-white bg-[#efefef]"><span class="h-0 w-0 border-y-[4px] border-r-[4px] border-y-transparent border-r-black"></span></span>
      <span class="w-[151px] border-r border-b border-[#a0a0a0] bg-[#efefef]"></span>
      <span class="flex-1 bg-[repeating-conic-gradient(#fff_0_25%,#e0e0e0_0_50%)] bg-[length:2px_2px]"></span>
      <span class="flex w-[16px] items-center justify-center border border-[#a0a0a0] border-t-white border-l-white bg-[#efefef]"><span class="h-0 w-0 border-y-[4px] border-l-[4px] border-y-transparent border-l-black"></span></span>
    </div>
    <!-- panel tabs -->
    <div class="flex h-[23px] w-[277px] items-stretch border-t border-[#2a4668] bg-[#f0f0f0] text-[#8a929c]">
      <div class="-mt-px flex w-[63px] items-center gap-[1px] border-t border-t-[#f0f0f0] border-r border-b border-[#2a4668] pl-[3px] text-[#1e395b]"><svg class="h-4 w-4"><use href="#exproj"/></svg>Projekt</div>
      <div class="flex w-[72px] items-center gap-[2px] pl-[4px]"><svg class="h-4 w-4"><use href="#exsym"/></svg><span>Symbole</span></div>
      <div class="my-[3px] w-px bg-[#a8a8a8]"></div>
      <div class="flex w-[78px] items-center gap-[1px] pl-[4px]"><svg class="h-4 w-4"><use href="#pol"/></svg><span>Polecenia</span></div>
      <div class="my-[3px] w-px bg-[#a8a8a8]"></div>
    </div>
  </aside>

  <!-- centre -->
  <div class="flex min-w-0 flex-1 flex-col border-l-2 border-[#b9bec6] bg-[#e8edf3] pb-[2px] pl-[3px] pr-[6px] pt-[1px]">
    <div class="flex h-[23px] shrink-0 items-end border-b border-[#b8b8b8] bg-[#f7f7f7] text-[#000]">
      <span class="mb-[5px] ml-[5px] h-0 w-0 border-y-[5px] border-r-[5px] border-y-transparent border-r-[#5a6a7c]"></span>
      <div class="-mb-px ml-[6px] flex h-[22px] w-[164px] items-center rounded-tr-[3px] border border-b-0 border-[#c0c0c0] bg-white pl-[27px] [clip-path:polygon(22px_0,100%_0,100%_100%,0_100%)]">
        <svg class="h-[12px] w-[12px]" viewBox="0 0 12 12"><path d="M6 1 11 6 6 11 1 6z" fill="none" stroke="#1616d8" stroke-width="1.300"/><circle cx="6" cy="6" r="2" fill="none" stroke="#1616d8"/></svg>
        <span class="ml-[13px] text-[11px] font-bold tracking-[-0.25px]">Przyklad 1: 0001</span>
        <svg class="ml-[10px] h-[14px] w-[14px]"><use href="#closex"/></svg>
      </div>
      <div class="-mb-px flex h-[22px] w-[146px] items-center rounded-t-[4px] border border-[#b8b8b8] bg-[#f0f0f0] pl-[6px]">
        <svg class="h-[10px] w-[8px]" viewBox="0 0 8 10"><path d="M7 2H3L1 4V6L3 8H7" fill="none" stroke="#000" stroke-width="1.400"/></svg>
        <span class="ml-[28px] tracking-[-0.1px] text-[#1a1040]">Przyklad 1: 0001</span>
      </div>
      <span class="mb-[5px] ml-auto mr-[11px] h-0 w-0 border-y-[5px] border-l-[5px] border-y-transparent border-l-[#5a6a7c]"></span>
    </div>
    <div class="ml-[1px] mr-[2px] mt-[2px] min-h-0 flex-1 border-t-2 border-l border-r border-[#8f9aa8] bg-[#cbd5e3] pl-[6px] pt-[108px]">
      <svg class="block h-[546px] w-[771px]" viewBox="294 305 771 546" font-family="Liberation Sans" font-size="6.500">
        <g id="schem">
          <rect x="294.500" y="305.500" width="770" height="545" fill="#fff" stroke="#000"/>
          <rect x="295" y="306" width="769" height="544" fill="url(#grid)"/>
          <g shape-rendering="crispEdges" fill="none" stroke="#000">
            <rect x="312.500" y="346.500" width="735" height="485.500" fill="#fff"/>
            <rect x="322.500" y="354.500" width="716" height="441" fill="url(#grid)"/>
            <rect x="313" y="796" width="734" height="36" fill="url(#grid)" stroke="none"/>
            <path d="M386.500 346V354M459.500 346V354M533.500 346V354M606.500 346V354M679.500 346V354M753.500 346V354M826.500 346V354M900.500 346V354M973.500 346V354"/>
            <path d="M312 428.500H322M312 501.500H322M312 575.500H322M312 648.500H322M312 722.500H322M1038 428.500H1047M1038 501.500H1047M1038 575.500H1047M1038 648.500H1047M1038 722.500H1047"/>
            <!-- busbars -->
            <path d="M344 373.500H1010M344 382.500H1010M344 391.500H1010M344 694.500H1010M344 703.500H1010"/>
            <!-- Q1 branch -->
            <path d="M414.500 373V628M423.500 382V628M432.500 391V628M441.500 602.500V628M441.500 602.500H468.500V694M414.500 641V748M423.500 641V748M432.500 641V748M441.500 641V748M451.500 703V748"/>
            <path d="M408 630 414 641M417 630 423 641M426 630 432 641M435 630 441 641"/>
            <path d="M395 624.500H405.500V648.500H432M395 624.500V640M391 638 397 648M395.500 648V668.500H410" />
            <path d="M397 633.500H449V660" stroke-dasharray="2 2"/>
            <rect x="409.500" y="659.500" width="37" height="5.500" rx="2.500" fill="#fff"/>
            <rect x="444.500" y="645.500" width="7" height="7" fill="#fff"/>
            <!-- motor branch -->
            <path d="M561.500 373V433M570.500 382V433M579.500 391V433M561.500 446V568M570.500 446V568M579.500 446V568M561.500 590V639M570.500 590V639M579.500 590V639M561.500 667V745M570.500 667V745M579.500 667V745M588.500 703V748"/>
            <path d="M555 436 561 446M564 436 570 446M573 436 579 446M555 579 561 590M564 579 570 590M573 579 579 590M628 579 634 590M637 579 643 590M646 579 652 590"/>
            <path d="M524 442.500H538M548 442.500H575" stroke-dasharray="3 2"/>
            <path d="M524 439V446M543.500 451V461.500H551"/>
            <rect x="538.500" y="438.500" width="9" height="9" fill="#fff"/>
            <path d="M543 438V447M538 443H548"/>
            <rect x="551.500" y="455.500" width="37" height="10.500" fill="#fff"/>
            <path d="M557 458H561.500V463H557M566 458H570.500V463H566M575 458H579.500V463H575"/>
            <path d="M579 547.500H652.500V579M570 557.500H643.500V579M561 566.500H634.500V579M634.500 590V602.500H579M643.500 590V612.500H570M652.500 590V621.500H561"/>
            <rect x="551.500" y="639.500" width="37" height="28" fill="#fff"/>
            <path d="M550 740 600 748M561.500 745V763M570.500 745V763M579.500 745V763M588.500 748V772.500H583"/>
            <circle cx="570" cy="776.500" r="14" fill="#fff"/>
            <!-- control branches -->
            <path d="M717.500 391V495M717.500 507V653M717.500 663V694M790.500 391V495M790.500 507V653M790.500 663V694M863.500 391V580M863.500 591V653M863.500 663V694M937.500 391V580M937.500 591V653M937.500 663V694"/>
            <path d="M717 447.500H753.500V495M753.500 507V566.500H717M790 447.500H826.500V495M826.500 507V566.500H790"/>
            <path d="M711 496 717 507M748 496 753 507M785 496 790 507M821 496 826 507M858 580 863 591M932 580 937 591M702 503H711M775 503H785"/>
            <rect x="707.500" y="653.500" width="18" height="9" fill="#fff"/>
            <rect x="780.500" y="653.500" width="18" height="9" fill="#fff"/>
            <circle cx="863.500" cy="658" r="4.500" fill="#fff"/>
            <circle cx="937" cy="658" r="4.500" fill="#fff"/>
            <path d="M860 655 867 661M867 655 860 661M934 655 940 661M940 655 934 661"/>
            <!-- terminals -->
            <g fill="#fff"><circle cx="717" cy="469" r="1.500"/><circle cx="717" cy="543" r="1.500"/><circle cx="790" cy="469" r="1.500"/><circle cx="790" cy="543" r="1.500"/><circle cx="863" cy="625" r="1.500"/><circle cx="937" cy="625" r="1.500"/><circle cx="414" cy="726" r="1.500"/><circle cx="423" cy="726" r="1.500"/><circle cx="432" cy="726" r="1.500"/><circle cx="441" cy="726" r="1.500"/><circle cx="451" cy="726" r="1.500"/><circle cx="561" cy="726" r="1.500"/><circle cx="570" cy="726" r="1.500"/><circle cx="579" cy="726" r="1.500"/><circle cx="588" cy="726" r="1.500"/></g>
            <!-- title block -->
            <path d="M313 795.500H1047M413.500 795V832M588.500 795V832M771.500 795V832M771.500 813.500H1047M826.500 795V832M914.500 795V813M946.500 795V832M996.500 795V832M881.500 813V832"/>
            <path d="M321 814.500H333M393 814.500H405"/>
            <g stroke-width="1"><path d="M341 372H344M341 381H344M341 390H344M341 693H344M341 702H344M1010 373 1014 375M1010 382 1014 384M1010 391 1014 393M1010 694 1014 696M1010 703 1014 705"/></g>
          </g>
          <g fill="#000">
            <circle cx="414" cy="373.500" r="2"/><circle cx="423" cy="382.500" r="2"/><circle cx="432" cy="391.500" r="2"/><circle cx="561" cy="373.500" r="2"/><circle cx="570" cy="382.500" r="2"/><circle cx="579" cy="391.500" r="2"/><circle cx="717" cy="391.500" r="2"/><circle cx="790" cy="391.500" r="2"/><circle cx="863" cy="391.500" r="2"/><circle cx="937" cy="391.500" r="2"/><circle cx="717" cy="447" r="2"/><circle cx="790" cy="447" r="2"/><circle cx="717" cy="566" r="2"/><circle cx="790" cy="566" r="2"/><circle cx="579" cy="547.500" r="2"/><circle cx="570" cy="557" r="2"/><circle cx="561" cy="566" r="2"/><circle cx="579" cy="602.500" r="2"/><circle cx="570" cy="612" r="2"/><circle cx="561" cy="621" r="2"/><circle cx="469" cy="694.500" r="2"/><circle cx="451" cy="703.500" r="2"/><circle cx="588" cy="703.500" r="2"/><circle cx="717" cy="694.500" r="2"/><circle cx="790" cy="694.500" r="2"/><circle cx="863" cy="694.500" r="2"/><circle cx="937" cy="694.500" r="2"/>
            <text x="349" y="353" text-anchor="middle" font-weight="700">0</text><text x="423" y="353" text-anchor="middle" font-weight="700">1</text><text x="496" y="353" text-anchor="middle" font-weight="700">2</text><text x="570" y="353" text-anchor="middle" font-weight="700">3</text><text x="643" y="353" text-anchor="middle" font-weight="700">4</text><text x="716" y="353" text-anchor="middle" font-weight="700">5</text><text x="790" y="353" text-anchor="middle" font-weight="700">6</text><text x="863" y="353" text-anchor="middle" font-weight="700">7</text><text x="937" y="353" text-anchor="middle" font-weight="700">8</text><text x="1010" y="353" text-anchor="middle" font-weight="700">9</text>
            <text x="317" y="395" text-anchor="middle" font-weight="700">A</text><text x="317" y="468" text-anchor="middle" font-weight="700">B</text><text x="317" y="541" text-anchor="middle" font-weight="700">C</text><text x="317" y="615" text-anchor="middle" font-weight="700">D</text><text x="317" y="688" text-anchor="middle" font-weight="700">E</text><text x="317" y="762" text-anchor="middle" font-weight="700">F</text>
            <text x="1042" y="395" text-anchor="middle" font-weight="700">A</text><text x="1042" y="468" text-anchor="middle" font-weight="700">B</text><text x="1042" y="541" text-anchor="middle" font-weight="700">C</text><text x="1042" y="615" text-anchor="middle" font-weight="700">D</text><text x="1042" y="688" text-anchor="middle" font-weight="700">E</text><text x="1042" y="762" text-anchor="middle" font-weight="700">F</text>
            <text x="347" y="372">L1</text><text x="347" y="381">L2</text><text x="347" y="390">L3</text><text x="347" y="693">N</text><text x="347" y="702">PE</text>
            <text x="1002" y="371">L1</text><text x="1001" y="380">L2</text><text x="1001" y="389">L3</text><text x="1004" y="692">N</text><text x="1000" y="701">PE</text>
            <text x="1015" y="376" font-weight="700">7.0</text><text x="1015" y="385" font-weight="700">7.0</text><text x="1015" y="394" font-weight="700">7.0</text><text x="1015" y="697" font-weight="700">7.0</text><text x="1015" y="706" font-weight="700">7.0</text>
            <text x="562" y="434">1</text><text x="571" y="434">3</text><text x="580" y="434">5</text><text x="530" y="462">F11</text><text x="562" y="472">2</text><text x="571" y="472">4</text><text x="580" y="472">6</text>
            <text x="562" y="577">1</text><text x="571" y="577">3</text><text x="580" y="577">5</text><text x="635" y="577">1</text><text x="644" y="577">3</text><text x="653" y="577">5</text>
            <text x="562" y="595">2</text><text x="571" y="595">4</text><text x="580" y="595">6</text><text x="635" y="595">2</text><text x="644" y="595">4</text><text x="653" y="595">6</text>
            <text x="542" y="586">K11</text><text x="543" y="593">.15.</text><text x="614" y="586">K12</text><text x="616" y="593">.16.</text><text x="536" y="652">Q7</text>
            <text x="415" y="623">1</text><text x="424" y="623">3</text><text x="433" y="623">5</text><text x="442" y="623">N</text><text x="415" y="677">2</text><text x="424" y="677">4</text><text x="433" y="677">6</text><text x="442" y="677">N</text><text x="377" y="644">Q11</text>
            <text x="400" y="729">X1</text><text x="547" y="729">X1</text>
            <text transform="translate(413 724) rotate(-90)">L1</text><text transform="translate(422 724) rotate(-90)">L2</text><text transform="translate(431 724) rotate(-90)">L3</text><text transform="translate(440 724) rotate(-90)">N</text><text transform="translate(450 724) rotate(-90)">PE</text>
            <text transform="translate(560 724) rotate(-90)">S1</text><text transform="translate(569 724) rotate(-90)">S2</text><text transform="translate(578 724) rotate(-90)">S3</text><text transform="translate(587 724) rotate(-90)">PE</text>
            <g font-size="6" font-weight="700"><text transform="translate(415 790) rotate(-90)">ZASILANIE L1</text><text transform="translate(424 790) rotate(-90)">ZASILANIE L2</text><text transform="translate(433 790) rotate(-90)">ZASILANIE L3</text><text transform="translate(442 790) rotate(-90)">ZASILANIE N</text><text transform="translate(452 790) rotate(-90)">ZASILANIE PE</text></g>
            <text x="562" y="743">1</text><text x="571" y="743">2</text><text x="580" y="743">3</text><text x="589" y="745">4</text><text x="599" y="749">W1</text><text x="597" y="757">Same M1</text>
            <text x="562" y="761">U</text><text x="571" y="761">V</text><text x="580" y="761">W</text><text x="589" y="761">PE</text>
            <text x="570" y="774" text-anchor="middle">M</text><text x="570" y="781" text-anchor="middle">3~</text><text x="597" y="776">7,7 kW</text>
            <text x="546" y="779">M1</text><text x="538" y="786">Same</text><text x="522" y="792">16,1/64L-7</text>
            <text x="721" y="495">13</text><text x="720" y="511">14</text><text x="755" y="495">43</text><text x="755" y="512">44</text><text x="688" y="504">S11 E</text><text x="735" y="504">K11</text><text x="735" y="511">.15.</text>
            <text x="794" y="495">13</text><text x="793" y="511">14</text><text x="828" y="495">43</text><text x="828" y="512">44</text><text x="760" y="504">S12 E</text><text x="807" y="504">K12</text><text x="808" y="511">.16.</text>
            <text x="704" y="472">X2</text><text x="704" y="545">X2</text><text x="777" y="472">X2</text><text x="777" y="545">X2</text><text x="719" y="467">1</text><text x="719" y="540">2</text><text x="792" y="467">1</text><text x="792" y="540">2</text>
            <text x="719" y="651">A1</text><text x="719" y="670">A2</text><text x="695" y="661">K11</text><text x="792" y="651">A1</text><text x="792" y="670">A2</text><text x="768" y="661">K12</text>
            <text x="865" y="578">13</text><text x="865" y="595">14</text><text x="845" y="587">K11</text><text x="845" y="594">.15.</text><text x="850" y="629">X2</text><text x="866" y="623">3</text><text x="846" y="661">H11</text><text x="865" y="651">1</text><text x="865" y="669">2</text>
            <text x="939" y="578">13</text><text x="939" y="595">14</text><text x="918" y="587">K12</text><text x="918" y="594">.16.</text><text x="923" y="629">X2</text><text x="939" y="623">SP</text><text x="919" y="661">H12</text><text x="938" y="651">1</text><text x="938" y="669">2</text>
          </g>
          <text x="363" y="822" text-anchor="middle" font-size="20" fill="#fff" stroke="#222" stroke-width=".7">Logo</text>
          <g fill="#444" letter-spacing=".6" font-size="6.200">
            <text x="421" y="807">IGE+XAO Polska</text><text x="421" y="815">Projekt przykładowy 1</text><text x="421" y="823">Projekt przykładowy w SEE Electrical</text>
            <text x="595" y="807">Schemat sterowania - Silnik M1</text>
            <text x="773" y="802">Projekt:</text><text x="787" y="810">Przykład 1</text><text x="773" y="821">Data:</text><text x="793" y="829">22-10-08</text>
            <text x="828" y="802" fill="#744">Nr rysunku:</text><text x="880" y="811" font-size="9">00:0:01</text><text x="828" y="821">Funkcja:</text><text x="883" y="821">Lokalizacja:</text>
            <text x="916" y="802" letter-spacing=".1">Nazwisko:</text><text x="948" y="802" letter-spacing=".3">Modyfikacja:</text><text x="998" y="802">Schemat:</text><text x="1032" y="811" font-size="8">1</text>
            <text x="948" y="821">Lb. sch:</text><text x="988" y="829">2</text><text x="998" y="821">Sch. nast:</text><text x="1037" y="829">2</text>
          </g>
        </g>
      </svg>
    </div>
  </div>

  <!-- right panel -->
  <aside class="flex w-[198px] shrink-0 flex-col pt-[1px]">
    <div class="flex h-[19px] items-center justify-between bg-[linear-gradient(180deg,#c8d4e2,#dbe5f1)] pl-[4px] pr-[2px] text-[#5a6a7c]">
      <span>Właściwości</span>
      <span class="flex items-center gap-[7px]"><svg class="h-[11px] w-[9px]"><use href="#pin"/></svg><svg class="h-[13px] w-[13px]"><use href="#closex"/></svg></span>
    </div>
    <div class="mt-[2px] flex h-[345px] flex-col bg-white text-black">
      <div class="flex h-[22px] shrink-0 items-center border-b border-[#c8ccd4] bg-[linear-gradient(180deg,#fff_30%,#f0f2f5_35%)] pt-[2px]">
        <span class="w-[100px] border-r border-[#e0e0e0] pl-[6px]">Nazwa</span><span class="pl-[6px]">Wartość</span>
      </div>
      <div class="flex min-h-0 flex-1">
        <div class="w-[100px] border-r border-[#e8e8e8]"></div>
        <div class="flex-1"></div>
        <div class="flex w-[17px] flex-col">
          <span class="flex h-[17px] items-center justify-center border border-[#808080] border-t-white border-l-white bg-[#efefef]"><span class="h-0 w-0 border-x-[4px] border-b-[4px] border-x-transparent border-b-black"></span></span>
          <span class="h-[95px] border-b border-r border-[#a0a0a0] bg-[#efefef]"></span>
          <span class="flex-1 bg-[repeating-conic-gradient(#fff_0_25%,#e0e0e0_0_50%)] bg-[length:2px_2px]"></span>
          <span class="flex h-[17px] items-center justify-center border border-[#808080] border-t-white border-l-white bg-[#efefef]"><span class="h-0 w-0 border-x-[4px] border-t-[4px] border-x-transparent border-t-black"></span></span>
        </div>
      </div>
    </div>
    <div class="mt-[4px] ml-[1px] h-[60px] shrink-0 border border-[#b8b8b8] bg-[#efefef]"></div>
    <div class="mt-[5px] flex h-[19px] shrink-0 items-center justify-between bg-[linear-gradient(180deg,#c8d4e2,#dbe5f1)] pl-[4px] pr-[2px] pt-[2px] text-[#5a6a7c]">
      <span>Podgląd</span>
      <span class="flex items-center gap-[7px]"><svg class="h-[11px] w-[9px]"><use href="#pin"/></svg><svg class="h-[13px] w-[13px]"><use href="#closex"/></svg></span>
    </div>
    <div class="flex min-h-0 flex-1 items-start bg-[#cbd5e3] pl-[5px] pt-[104px]">
      <svg class="block h-[134px] w-[190px] opacity-85" viewBox="294 305 771 546"><use href="#schem"/></svg>
    </div>
  </aside>
</main>

<!-- status bar -->
<footer class="flex h-[21px] shrink-0 items-center justify-between border-t border-[#b8b8b8] border-b border-b-[#2a3a52] bg-[#f0efed] pl-[3px] text-black">
  <span>Pomoc, naciśnij F1</span>
  <div class="flex h-full text-[#6a7a8c]">
    <span class="flex w-[27px] items-center justify-center border-l border-[#d0d0d0]">CAP</span>
    <span class="flex w-[32px] items-center justify-center border-l border-[#d0d0d0] text-[#1a2a40]">NUM</span>
    <span class="flex w-[30px] items-center justify-center overflow-hidden whitespace-nowrap border-l border-[#d0d0d0]">SCRL</span>
  </div>
</footer>
</div>
</body>
</html>
